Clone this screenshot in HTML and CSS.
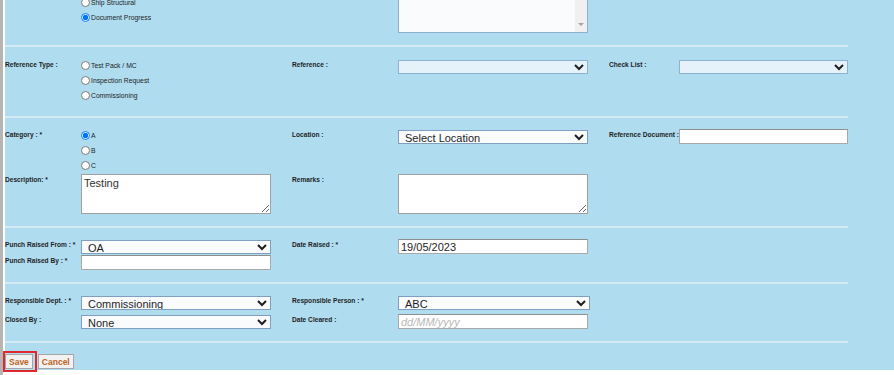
FILE: index.html
```html
<!DOCTYPE html>
<html lang="en">
<head>
    <meta charset="UTF-8">
    <meta name="viewport" content="width=device-width, initial-scale=1.0">
    <title>Punch List - Add Punch</title>
    <link rel="stylesheet" href="styles.css">
</head>
<body>
    <div class="page">
        <!-- punch category (scrolled, top cut off) -->
        <div class="form-section first">
            <div class="field-label"></div>
            <div class="radio-list">
                <label class="radio-item"><input type="radio" name="punchCat"> Ship Structural</label>
                <label class="radio-item"><input type="radio" name="punchCat" checked> Document Progress</label>
            </div>
            <div class="field-label"></div>
            <div class="scroll-box">
                <textarea class="scroll-area"></textarea>
                <div class="scroll-track"><span class="scroll-arrow"></span></div>
            </div>
        </div>

        <div class="form-section loose">
            <div class="field-label">Reference Type :</div>
            <div class="radio-list">
                <label class="radio-item"><input type="radio" name="refType"> Test Pack / MC</label>
                <label class="radio-item"><input type="radio" name="refType"> Inspection Request</label>
                <label class="radio-item"><input type="radio" name="refType"> Commissioning</label>
            </div>
            <div class="field-label">Reference :</div>
            <div><select class="field-select empty"><option></option></select></div>
            <div class="field-label">Check List :</div>
            <div><select class="field-select empty"><option></option></select></div>
        </div>

        <div class="form-section">
            <div class="field-label">Category : *</div>
            <div class="radio-list">
                <label class="radio-item"><input type="radio" name="category" checked> A</label>
                <label class="radio-item"><input type="radio" name="category"> B</label>
                <label class="radio-item"><input type="radio" name="category"> C</label>
            </div>
            <div class="field-label">Location :</div>
            <div>
                <select class="field-select">
                    <option>Select Location</option>
                </select>
            </div>
            <div class="field-label">Reference Document :</div>
            <div><input type="text" class="field-input"></div>

            <div class="field-label">Description: *</div>
            <div><textarea class="field-area">Testing</textarea></div>
            <div class="field-label">Remarks :</div>
            <div><textarea class="field-area"></textarea></div>
        </div>

        <div class="form-section">
            <div class="field-label">Punch Raised From : *</div>
            <div>
                <select class="field-select">
                    <option>OA</option>
                </select>
            </div>
            <div class="field-label">Date Raised : *</div>
            <div><input type="text" class="field-input" value="19/05/2023"></div>
            <div class="field-label"></div>
            <div></div>

            <div class="field-label">Punch Raised By : *</div>
            <div><input type="text" class="field-input"></div>
        </div>

        <div class="form-section spaced">
            <div class="field-label">Responsible Dept. : *</div>
            <div>
                <select class="field-select">
                    <option>Commissioning</option>
                </select>
            </div>
            <div class="field-label">Responsible Person : *</div>
            <div>
                <select class="field-select wide">
                    <option>ABC</option>
                </select>
            </div>
            <div class="field-label"></div>
            <div></div>

            <div class="field-label">Closed By :</div>
            <div>
                <select class="field-select">
                    <option>None</option>
                </select>
            </div>
            <div class="field-label">Date Cleared :</div>
            <div><input type="text" class="field-input" placeholder="dd/MM/yyyy"></div>
        </div>

        <div class="actions">
            <span class="highlight"><button class="btn">Save</button></span>
            <button class="btn">Cancel</button>
        </div>
    </div>
</body>
</html>
```

FILE: styles.css
```css
* {
    box-sizing: border-box;
}

body {
    margin: 0;
    background: #ffffff;
    border-left: 3px solid #b5b5b5;
    min-height: 100vh;
    font-family: 'Liberation Sans', Arial, sans-serif;
    color: #1e1e1e;
}

.page {
    margin-left: 2px;
    background: #b0dcf0;
}

.form-section {
    display: grid;
    grid-template-columns: 76px 211px 106px 211px 70px 169px;
    align-items: start;
    width: 843px;
    padding: 10px 0 12px;
    border-bottom: 2px solid #d6eaf4;
}

.form-section.first {
    margin-top: -16px;
    padding-top: 11px;
}

.form-section.loose {
    padding: 11px 0 13px;
}

.form-section.spaced {
    row-gap: 3px;
}

.field-label {
    padding-top: 2px;
    font-size: 6.6px;
    line-height: 9px;
    font-weight: 700;
    white-space: nowrap;
}

.radio-list {
    display: flex;
    flex-direction: column;
}

.radio-item {
    display: flex;
    align-items: center;
    height: 15px;
    font-size: 6.8px;
    white-space: nowrap;
}

.radio-item input {
    width: 9px;
    height: 9px;
    margin: 0 1px 0 0;
}

.field-select {
    display: block;
    width: 190px;
    height: 14px;
    margin-top: 2px;
    padding: 0 0 0 2px;
    border: 1px solid #7f9fc2;
    border-radius: 0;
    background: #f9fbfd;
    font-family: 'Liberation Sans', Arial, sans-serif;
    font-size: 11px;
    color: #1e1e1e;
}

.field-select.empty {
    background: #e6f2f9;
    border-color: #8db2d4;
}

.field-select.wide {
    width: 192px;
}

.field-input {
    display: block;
    width: 190px;
    height: 15px;
    margin-top: 1px;
    padding: 0 2px;
    border: 1px solid #a9a9a9;
    border-top-color: #8e8e8e;
    background: #ffffff;
    font-family: 'Liberation Sans', Arial, sans-serif;
    font-size: 11px;
    color: #1e1e1e;
}

.form-section > div:nth-child(6) .field-select,
.form-section > div:nth-child(6) .field-input {
    width: 169px;
}

.field-input::placeholder {
    color: #b8b8b8;
    font-style: italic;
}

.field-area {
    display: block;
    width: 190px;
    height: 40px;
    margin-top: 1px;
    padding: 2px;
    border: 1px solid #a0a0a0;
    background: #ffffff;
    font-family: 'Liberation Sans', Arial, sans-serif;
    font-size: 11px;
    color: #333333;
}

.scroll-box {
    display: flex;
    width: 190px;
    height: 37px;
    margin-top: 1px;
    border: 1px solid #8fb1d0;
    background: #f9fbfd;
}

.scroll-area {
    flex: 1;
    border: none;
    resize: none;
    background: transparent;
    outline: none;
}

.scroll-track {
    width: 12px;
    display: flex;
    align-items: flex-end;
    justify-content: center;
    padding-bottom: 6px;
    background: #f0f0f0;
}

.scroll-arrow {
    width: 0;
    height: 0;
    border-left: 3px solid transparent;
    border-right: 3px solid transparent;
    border-top: 3px solid #a3a3a3;
}

.actions {
    display: flex;
    align-items: flex-start;
    gap: 1px;
    height: 27px;
    padding-top: 8px;
}

.highlight {
    display: inline-flex;
    margin-left: -2px;
    padding: 1px 2px 1px 0;
    border: 2px solid #e3262d;
}

.btn {
    height: 15px;
    padding: 0 3px;
    border: 1px solid #a6a6a6;
    border-radius: 0;
    background: #f2f2f2;
    font-family: 'Liberation Sans', Arial, sans-serif;
    font-size: 8.5px;
    font-weight: 700;
    color: #c0641c;
    cursor: pointer;
}

.actions > .btn {
    margin-top: 3px;
}
```
